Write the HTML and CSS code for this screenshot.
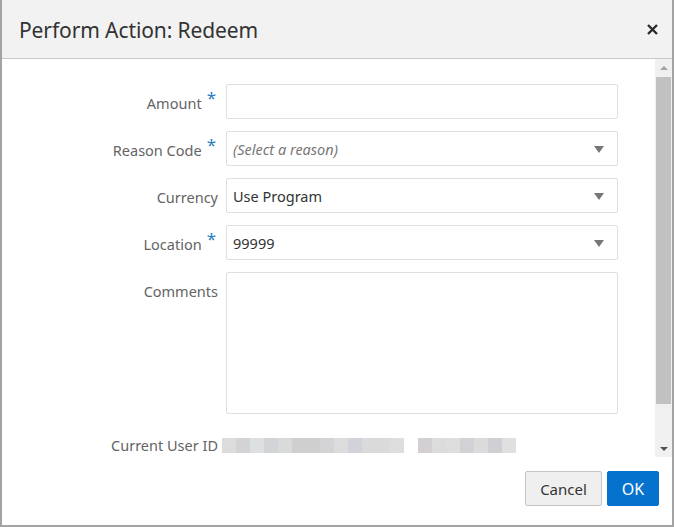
FILE: index.html
```html
<!DOCTYPE html>
<html lang="en">
<head>
    <meta charset="UTF-8">
    <meta name="viewport" content="width=device-width, initial-scale=1.0">
    <title>Perform Action: Redeem</title>
    <link rel="stylesheet" href="styles.css">
</head>
<body>
    <div class="dialog">
        <div class="dialog-header">
            <h1>Perform Action: Redeem</h1>
            <button class="close" title="Close">
                <svg width="11" height="11" viewBox="0 0 11 11"><path d="M1 1 L10 10 M10 1 L1 10" stroke="#2b2b2b" stroke-width="2.4" stroke-linecap="butt"/></svg>
            </button>
        </div>

        <div class="dialog-body">
            <div class="scroll-content">
                <form class="form-grid">
                    <label class="field-label" for="amount">Amount<span class="req">*</span></label>
                    <input type="text" id="amount" class="field-input">

                    <label class="field-label">Reason Code<span class="req">*</span></label>
                    <div class="field-input select">
                        <span class="placeholder">(Select a reason)</span>
                        <span class="arrow"></span>
                    </div>

                    <label class="field-label">Currency</label>
                    <div class="field-input select">
                        <span>Use Program</span>
                        <span class="arrow"></span>
                    </div>

                    <label class="field-label">Location<span class="req">*</span></label>
                    <div class="field-input select">
                        <span>99999</span>
                        <span class="arrow"></span>
                    </div>

                    <label class="field-label top" for="comments">Comments</label>
                    <textarea id="comments" class="field-input comments"></textarea>

                    <label class="field-label">Current User ID</label>
                    <div class="readonly-value"><span class="blur blur-a"></span><span class="blur blur-b"></span></div>
                </form>
            </div>
            <div class="scrollbar">
                <div class="sb-btn"><span class="sb-up"></span></div>
                <div class="sb-track"><div class="sb-thumb"></div></div>
                <div class="sb-btn"><span class="sb-down"></span></div>
            </div>
        </div>

        <div class="dialog-footer">
            <button class="btn btn-cancel">Cancel</button>
            <button class="btn btn-ok">OK</button>
        </div>
    </div>
</body>
</html>
```

FILE: styles.css
```css
html, body {
    margin: 0;
    padding: 0;
}
body {
    font-family: "Noto Sans", "Open Sans", sans-serif;
    color: #333;
    background: #fff;
}
.dialog {
    width: 674px;
    height: 527px;
    box-sizing: border-box;
    border: 2px solid #a3a3a3;
    border-top: none;
    display: flex;
    flex-direction: column;
    background: #fff;
}
.dialog-header {
    height: 58px;
    flex: none;
    background-color: #f2f2f2;
    border-bottom: 1px solid #c9c9c9;
    display: flex;
    align-items: center;
    justify-content: space-between;
    padding: 0 14px 0 17px;
}
.dialog-header h1 {
    margin: 0;
    font-size: 21px;
    font-weight: normal;
    color: #333;
    letter-spacing: -0.1px;
    padding-top: 1px;
}
.close {
    background: none;
    border: none;
    padding: 0;
    width: 11px;
    height: 11px;
    display: flex;
    cursor: pointer;
}
.dialog-body {
    height: 398px;
    flex: none;
    display: flex;
}
.scroll-content {
    flex: 1;
    overflow: hidden;
}
.form-grid {
    display: grid;
    grid-template-columns: 216px 392px;
    column-gap: 8px;
    row-gap: 12px;
    padding-top: 25px;
    margin: 0;
}
.field-label {
    font-size: 14.5px;
    color: #646464;
    text-align: right;
    align-self: center;
    padding-top: 3px;
}
.field-label.top {
    align-self: start;
    padding-top: 9px;
}
.req {
    color: #2a7dc4;
    font-size: 17px;
    display: inline-block;
    vertical-align: top;
    margin-left: 5px;
    margin-right: 2px;
    line-height: 14px;
    position: relative;
    top: -2px;
}
.field-input {
    height: 35px;
    box-sizing: border-box;
    border: 1px solid #dfdfdf;
    border-radius: 2px;
    background: #fff;
    font-family: inherit;
    font-size: 14.5px;
    color: #333;
    padding: 0 6px;
    margin: 0;
    outline: none;
}
.select {
    display: flex;
    align-items: center;
    justify-content: space-between;
    padding-right: 13px;
}
.placeholder {
    font-style: italic;
    color: #777;
}
.arrow {
    width: 0;
    height: 0;
    border-left: 5.5px solid transparent;
    border-right: 5.5px solid transparent;
    border-top: 7px solid #777;
    margin-top: 1px;
}
.comments {
    height: 142px;
    resize: none;
}
.readonly-value {
    height: 35px;
    display: flex;
    align-items: center;
    padding-top: 4px;
    box-sizing: border-box;
    margin-left: -4px;
}
.blur {
    display: block;
    height: 15px;
}
.blur-a {
    width: 182px;
    background: linear-gradient(to right,
        #dcdcdc 0, #dcdcdc 14px, #d3d3d5 14px, #d3d3d5 28px, #dde0e0 28px, #dde0e0 42px,
        #d3d4d8 42px, #d3d4d8 56px, #d9dbdb 56px, #d9dbdb 70px, #cfcfd0 70px, #cfcfd0 98px,
        #d4d4d6 98px, #d4d4d6 112px, #dcdcdc 112px, #dcdcdc 126px, #d2d2da 126px, #d2d2da 140px,
        #dadada 140px, #dadada 168px, #dedede 168px, #dedede 182px);
}
.blur-b {
    width: 98px;
    margin-left: 14px;
    background: linear-gradient(to right,
        #d3cfd2 0, #d3cfd2 14px, #dcdcdc 14px, #dcdcdc 28px, #dedede 28px, #dedede 42px,
        #d2d2d6 42px, #d2d2d6 56px, #dadcdc 56px, #dadcdc 70px, #d0d0d4 70px, #d0d0d4 84px,
        #e0e0e0 84px, #e0e0e0 98px);
}
.scrollbar {
    width: 17px;
    flex: none;
    background: #f0f0f0;
    display: flex;
    flex-direction: column;
}
.sb-btn {
    height: 17px;
    flex: none;
    display: flex;
    align-items: center;
    justify-content: center;
}
.sb-up {
    width: 0;
    height: 0;
    border-left: 4px solid transparent;
    border-right: 4px solid transparent;
    border-bottom: 4px solid #a3a3a3;
}
.sb-down {
    width: 0;
    height: 0;
    border-left: 4px solid transparent;
    border-right: 4px solid transparent;
    border-top: 4px solid #505050;
}
.sb-track {
    flex: 1;
    padding: 1px 1px 0;
}
.sb-thumb {
    height: 327px;
    background: #c1c1c1;
}
.dialog-footer {
    flex: 1;
    display: flex;
    justify-content: flex-end;
    align-items: flex-start;
    gap: 5px;
    padding: 14px 13px 0 0;
}
.btn {
    height: 35px;
    font-family: inherit;
    font-size: 15px;
    border-radius: 2px;
    cursor: pointer;
    padding: 0;
}
.btn-cancel {
    width: 77px;
    background-color: #efefef;
    border: 1px solid #c5c5c5;
    color: #333;
}
.btn-ok {
    width: 52px;
    background-color: #0572ce;
    border: 1px solid #0572ce;
    color: #fff;
    font-size: 16px;
}
```
